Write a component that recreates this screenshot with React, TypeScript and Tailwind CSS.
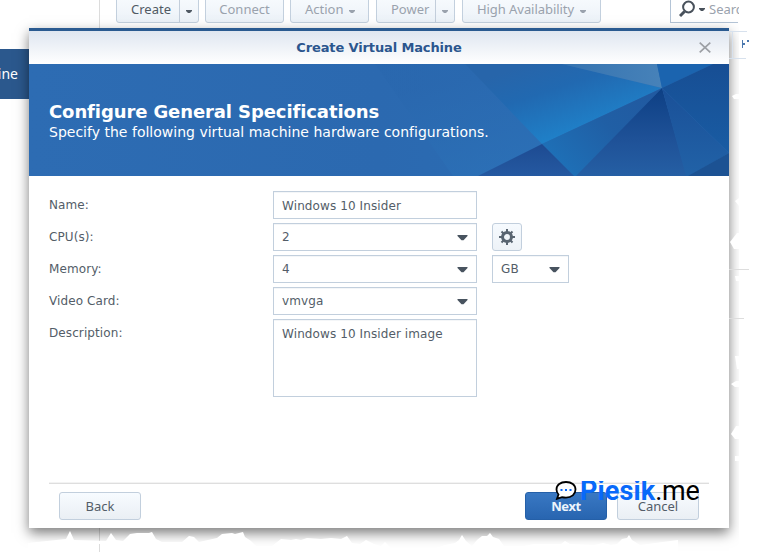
import type { ReactNode } from "react";

const verdana = "font-['DejaVu_Sans',Verdana,sans-serif]";
const noto = "font-['Noto_Sans',sans-serif]";

function Caret({ className = "" }: { className?: string }) {
  return (
    <svg className={className} width="6" height="3" viewBox="0 0 6 3" fill="currentColor">
      <path d="M0 0h6v1L4 3H2L0 1z" />
    </svg>
  );
}

function ToolButton({ className, children }: { className: string; children: ReactNode }) {
  return (
    <div className={`-mt-[5px] flex h-7 shrink-0 items-center rounded-[3px] border border-[#c3d0de] bg-linear-to-b from-[#f8fbfe] to-[#ecf2f8] ${className}`}>
      {children}
    </div>
  );
}

function Toolbar() {
  return (
    <div className={`flex h-[30px] pl-[116px] text-[13px] leading-[18px] text-[#9aa2ad] ${noto}`}>
      <ToolButton className="w-[83px] text-[#505a64]">
        <span className="w-[62px] pl-[14px]">Create</span>
        <span className="flex h-full flex-1 items-center justify-center border-l border-[#c3cedb]"><Caret className="mt-1 mr-px" /></span>
      </ToolButton>
      <ToolButton className="ml-1.5 w-[79px] justify-center">Connect</ToolButton>
      <ToolButton className="ml-1.5 w-[79px] pl-[14px]">Action<Caret className="mt-1 ml-[5px]" /></ToolButton>
      <ToolButton className="ml-[7px] w-[79px]">
        <span className="w-[58px] pl-[14px]">Power</span>
        <span className="flex h-full flex-1 items-center justify-center border-l border-[#c3cedb]"><Caret className="mt-1 mr-px" /></span>
      </ToolButton>
      <ToolButton className="ml-[7px] w-[139px] pl-[14px]"><span className="tracking-[-0.06px]">High Availability</span><Caret className="mt-1 ml-[6px]" /></ToolButton>
      <div className="ml-[69px] flex h-[23px] w-[71px] items-start overflow-hidden border-l border-[#b4c4d6] whitespace-nowrap">
        <div className="flex h-[23px] w-[67px] shrink-0 border-b border-[#b4c4d6]">
          <svg className="ml-2 shrink-0" width="17" height="18" viewBox="0 0 17 18" fill="none" stroke="#48515b">
            <circle cx="9.5" cy="7" r="5.4" strokeWidth="2" />
            <path d="M5.5 11.5 1 16" strokeWidth="3" />
          </svg>
          <Caret className="mt-2 ml-[3px] shrink-0 text-[#48515b]" />
          <span className="ml-[4px] block w-[31px] shrink-0 overflow-hidden">Search</span>
        </div>
      </div>
    </div>
  );
}

function BannerArt() {
  return (
    <svg className="absolute inset-0" width="700" height="112" viewBox="0 0 700 112">
      <defs>
        <linearGradient id="base" x1="0" x2="1">
          <stop offset="0" stopColor="#2d6cb3" /><stop offset=".5" stopColor="#2b69b0" /><stop offset=".7" stopColor="#2b6cb3" />
        </linearGradient>
        <linearGradient id="bright" gradientUnits="userSpaceOnUse" x1="500" y1="0" x2="525" y2="75">
          <stop offset="0" stopColor="#2765aa" /><stop offset=".4" stopColor="#2169b1" /><stop offset="1" stopColor="#1f80c8" />
        </linearGradient>
        <linearGradient id="left" gradientUnits="userSpaceOnUse" x1="440" y1="10" x2="470" y2="110">
          <stop offset="0" stopColor="#2967ae" /><stop offset="1" stopColor="#2c72b8" />
        </linearGradient>
        <linearGradient id="pale" x1="0" x2="1"><stop offset="0" stopColor="#3573b0" /><stop offset="1" stopColor="#4782b9" /></linearGradient>
        <linearGradient id="mid" gradientUnits="userSpaceOnUse" x1="630" y1="24" x2="540" y2="112">
          <stop offset="0" stopColor="#2159a0" /><stop offset=".5" stopColor="#205fa5" /><stop offset="1" stopColor="#1e70b7" />
        </linearGradient>
        <linearGradient id="navy" x1="0" y1="0" x2="0" y2="1"><stop offset="0" stopColor="#0d3f84" /><stop offset=".6" stopColor="#1f5298" /><stop offset="1" stopColor="#255fa4" /></linearGradient>
        <linearGradient id="low" x1="0" y1="0" x2="0" y2="1"><stop offset="0" stopColor="#1d4b92" /><stop offset="1" stopColor="#2559a1" /></linearGradient>
        <linearGradient id="right" x1="0" y1="0" x2="0" y2="1"><stop offset="0" stopColor="#174e94" /><stop offset="1" stopColor="#195ca3" /></linearGradient>
        <linearGradient id="wedge" x1="0" y1="0" x2="0" y2="1"><stop offset="0" stopColor="#1a5098" /><stop offset="1" stopColor="#2162a7" /></linearGradient>
      </defs>
      <path fill="url(#base)" d="M0 0h700v112H0z" />
      <path fill="url(#left)" d="M346 0h90l77 80-64 32h-25z" opacity=".6" />
      <path fill="url(#bright)" d="M436 0h97l100 24-120 56z" />
      <path fill="url(#pale)" d="M533 0h95l5 24z" />
      <path fill="#1b64af" d="M628 0h56l-51 24z" />
      <path fill="url(#right)" d="M633 24 684 0h16v89z" />
      <path fill="url(#mid)" d="m633 24-120 56 31 32h4z" />
      <path fill="url(#low)" d="m513 80-64 32h96z" />
      <path fill="url(#navy)" d="m633 24-86 88h111z" />
      <path fill="url(#wedge)" d="m633 24 67 65-40 23h-3z" />
      <path fill="#1c5293" d="m700 89-41 23h41z" />
    </svg>
  );
}

function Field({ label, children }: { label: string; children: ReactNode }) {
  return (
    <div className="flex items-start">
      <span className="w-56 pt-1.5 leading-4">{label}</span>
      {children}
    </div>
  );
}

const box = "border border-[#c2cfdd] bg-white shadow-[inset_0_1px_0_#f4f6f8]";

function Select({ value, className = "w-[204px]" }: { value: string; className?: string }) {
  return (
    <div className={`flex h-7 items-center justify-between pr-2 pl-2 ${box} ${className}`}>
      <span>{value}</span>
      <svg className="mt-px text-[#48535f]" width="11" height="6" viewBox="0 0 11 6" fill="currentColor"><path d="M.5 0h10v1L6.5 5.200h-2L.5 1z" /></svg>
    </div>
  );
}

function Gear() {
  return (
    <svg width="16" height="16" viewBox="0 0 16 16" stroke="#596571" fill="none">
      <circle cx="8" cy="8" r="4.5" strokeWidth="3" />
      <path strokeWidth="2" d="M8 0v3M8 13v3M0 8h3M13 8h3M2.500 2.500l2 2M11.500 11.500l2 2M2.500 13.500l2-2M11.500 4.500l2-2" />
    </svg>
  );
}

function Watermark() {
  return (
    <div className="absolute top-[450px] left-[525px] flex h-[19px] w-[145px] overflow-hidden font-[Roboto,sans-serif] text-[27px] leading-[20px] whitespace-nowrap">
      <svg className="ml-px shrink-0" width="22" height="19" viewBox="0 0 22 19">
        <path d="M11 1C5.500 1 1.500 4 1.500 8.500c0 2 .8 3.600 2 5L2 17.800l5-1.700c1.200.3 2.500.5 4 .5 5.500 0 9.500-3.300 9.500-8S16.500 1 11 1z" fill="white" stroke="black" strokeWidth="1.8" />
        <path d="M5.500 8h2v2h-2zM10 8h2v2h-2zM14.500 8h2v2h-2z" fill="#0869fa" />
      </svg>
      <span className="ml-[3px] font-bold tracking-[0.1px] text-[#0869fa]">Piesik</span>
      <span className="tracking-[-0.2px] text-black">.me</span>
    </div>
  );
}

function Dialog() {
  return (
    <div className={`absolute top-7 left-[29px] flex h-[500px] w-[700px] flex-col border-t-[3px] border-[#2a5a90] bg-white text-[12px] tracking-[0.1px] text-[#535d68] shadow-[0_5px_12px_rgba(0,0,0,0.52)] ${verdana}`}>
      <header className="grid h-[33px] shrink-0 grid-cols-[1fr_auto_1fr] items-center bg-linear-to-b from-[#dfe6f0] to-white">
        <span />
        <h1 className="text-[13px] font-bold tracking-[-0.13px] text-[#2b568e]">Create Virtual Machine</h1>
        <svg className="mr-[18px] justify-self-end" width="12" height="11" viewBox="0 0 12 11" stroke="#9c9fa4" strokeWidth="1.7"><path d="M.7.7l10.600 9.600M11.300.7.7 10.300" /></svg>
      </header>
      <section className="relative h-28 shrink-0 text-white">
        <BannerArt />
        <div className="relative pt-[37px] pl-5">
          <h2 className="text-[18px] leading-[22px] font-bold tracking-[-0.1px]">Configure General Specifications</h2>
          <p className="text-[14px] leading-[18px] tracking-[0.01px]">Specify the following virtual machine hardware configurations.</p>
        </div>
      </section>
      <section className="flex flex-1 flex-col gap-1 pt-[15px] pl-5">
        <Field label="Name:"><div className={`flex h-7 w-[204px] items-center px-2 pt-px ${box}`}>Windows 10 Insider</div></Field>
        <Field label="CPU(s):">
          <Select value="2" />
          <div className="ml-[15px] flex h-7 w-[30px] items-center justify-center rounded-[3px] border border-[#c2cfdd] bg-linear-to-b from-[#f6fafe] to-[#edf2f7]"><Gear /></div>
        </Field>
        <Field label="Memory:"><Select value="4" /><Select value="GB" className="ml-[15px] w-[77px]" /></Field>
        <Field label="Video Card:"><Select value="vmvga" /></Field>
        <Field label="Description:"><div className={`h-[78px] w-[204px] px-2 pt-1.5 leading-4 ${box}`}>Windows 10 Insider image</div></Field>
      </section>
      <footer className={`mx-5 flex h-[45px] shrink-0 items-start border-t border-[#dedede] px-2.5 pt-2 text-[13px] tracking-normal shadow-[0_-1px_0_#f3f3f3] ${noto}`}>
        <button className="h-7 w-[82px] rounded-[3px] border border-[#c2cfdd] bg-linear-to-b from-[#f7fbff] to-[#eaeff4] pt-px">Back</button>
        <button className="ml-auto h-7 w-[82px] rounded-[3px] border border-[#2560a8] bg-linear-to-b from-[#3978c3] to-[#2865b0] pt-px font-bold tracking-[-0.4px] text-[#edf4fc]">Next</button>
        <button className="ml-2.5 h-7 w-[82px] rounded-[3px] border border-[#c2cfdd] bg-linear-to-b from-[#f7fbff] to-[#eaeff4] pt-px">Cancel</button>
      </footer>
      <Watermark />
    </div>
  );
}

function TornEdges() {
  return (
    <svg className="absolute inset-0" width="762" height="557" viewBox="0 0 762 557" fill="white">
      <path d="M28 543l38-4 4-8 4 9 32 1 5-8 5 7 7 1 7-7 7-1h12l3-1 4 7 6 3h20l7-6 5 1 5 5 18-4 5-4 10-1 3 1 8-2 2 5 6 4 5 5h16l9-7 10 1 5-1 5 1 6-2 14 1 10-1 10 1 6-3 5 7 8 1 6-4 8 4 7 2 4-4 6 6h45l9-3 10-2 4-3 3-5 4 6 6 5 5-6 5-4 5 0 3-3 3 4 6 2 5 7h20l10-2h27l4-3 5 3 24 1 9-2 8 2 6-1 5-5 5-1 2-3 3 5 8 5 38-5v23H28z" />
      <path d="M99 544h1v8h-1z" fill="#dcdcdc" />
      <path d="M739 0h23v557h-23zM732 96l4-2h7v5h-9zM735 201l4-3v8zM730 242l7-9h6v16h-9zM735 276h8v5h-7zM735 356h8v13h-6zM731 384l5-3h7v6h-8zM731 434l5-8h7v13h-8zM735 456h8v5h-8z" />
      <path fill="#d7e1ed" d="M729 31h18v1h-18zM732 32h1v26h-1zM729 58h17v1h-17z" />
      <path fill="#4b78ae" d="M742 40h1v8h-1zM743 43h2v2h-2zM747 40h2v2h-2z" />
      <path fill="#ddd" d="M729 269h20v1h-20zM729 318h15v1h-15z" />
    </svg>
  );
}

export default function App() {
  return (
    <main className="relative h-[557px] w-[762px] overflow-hidden bg-white">
      <div className="absolute top-0 left-[99px] h-[552px] w-px bg-[#dcdcdc]" />
      <Toolbar />
      <div className={`mt-[19px] flex h-[50px] w-[29px] items-center justify-end overflow-hidden bg-[#2b588d] pr-[11px] pb-0.5 text-[14px] whitespace-nowrap text-white ${noto}`}>Virtual Machine</div>
      <Dialog />
      <TornEdges />
    </main>
  );
}
